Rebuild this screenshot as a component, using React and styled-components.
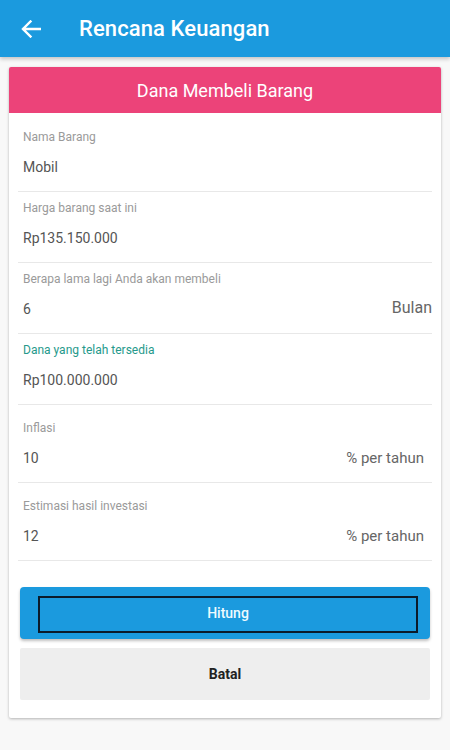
import React from "react";
import styled, { createGlobalStyle } from "styled-components";

const Global = createGlobalStyle`
  html, body { margin: 0; padding: 0; background: #f8f8f8; }
  body { font-family: Roboto, "Noto Sans", Arial, sans-serif; }
  * { box-sizing: border-box; }
`;

const Page = styled.div`
  width: 450px;
  min-height: 750px;
  background: #f8f8f8;
`;

const AppBar = styled.header`
  height: 57px;
  background: #1b9ade;
  display: flex;
  align-items: center;
  padding-left: 21px;
  box-shadow: 0 2px 4px rgba(0, 0, 0, 0.22);
  position: relative;
  z-index: 1;
`;

const BackBtn = styled.div`
  width: 20px;
  height: 20px;
  display: flex;
  align-items: center;
  justify-content: center;
`;

const Title = styled.h1`
  margin: 0 0 0 38px;
  font-size: 22px;
  font-weight: 500;
  color: #ffffff;
  letter-spacing: 0.1px;
`;

const Main = styled.main`
  padding: 10px 9px;
`;

const Card = styled.section`
  background: #fff;
  border-radius: 2px;
  box-shadow: 0 1px 3px rgba(0, 0, 0, 0.28);
  overflow: hidden;
  padding-bottom: 18px;
`;

const CardHeader = styled.div`
  height: 46px;
  background: #ec4379;
  color: #fff;
  font-size: 18px;
  display: flex;
  align-items: center;
  justify-content: center;
`;

const Fields = styled.div`
  padding: 0 9px;
`;

const Field = styled.div`
  padding: ${(p) => p.$top}px 0 14px 5px;
  border-bottom: 1px solid #e8e8e8;
`;

const Label = styled.div`
  font-size: 12px;
  line-height: 16px;
  color: ${(p) => (p.$active ? "#26998b" : "#9a9a9a")};
  margin-bottom: 12px;
`;

const ValueRow = styled.div`
  display: flex;
  align-items: center;
  justify-content: space-between;
  height: 20px;
`;

const Value = styled.span`
  font-size: 14px;
  color: #555;
`;

const Suffix = styled.span`
  font-size: ${(p) => p.$size}px;
  color: #666;
  margin-right: ${(p) => p.$right}px;
  margin-top: ${(p) => p.$shift}px;
`;

const Actions = styled.div`
  padding: 26px 11px 0;
  display: flex;
  flex-direction: column;
  gap: 9px;
`;

const PrimaryButton = styled.button`
  height: 52px;
  border: none;
  border-radius: 4px;
  background: #1b9ade;
  box-shadow: 0 2px 3px rgba(0, 0, 0, 0.25);
  padding: 9px 12px 6px 18px;
  display: flex;
  cursor: pointer;
`;

const FocusRing = styled.span`
  flex: 1;
  border: 2px solid #0b1b2b;
  display: flex;
  align-items: center;
  justify-content: center;
  padding-bottom: 3px;
  font-family: Roboto, sans-serif;
  font-size: 14px;
  font-weight: 500;
  color: #eefaff;
`;

const SecondaryButton = styled.button`
  height: 52px;
  border: none;
  border-radius: 2px;
  background: #eeeeee;
  font-family: Roboto, sans-serif;
  font-size: 14px;
  font-weight: 700;
  color: #222;
  cursor: pointer;
`;

const fields = [
  { label: "Nama Barang", value: "Mobil", top: 16 },
  { label: "Harga barang saat ini", value: "Rp135.150.000", top: 8 },
  {
    label: "Berapa lama lagi Anda akan membeli",
    value: "6",
    top: 8,
    suffix: "Bulan",
    size: 16,
    right: 0,
    shift: -4,
  },
  { label: "Dana yang telah tersedia", value: "Rp100.000.000", top: 8, active: true },
  { label: "Inflasi", value: "10", top: 15, suffix: "% per tahun", size: 15, right: 8, shift: 0 },
  {
    label: "Estimasi hasil investasi",
    value: "12",
    top: 15,
    suffix: "% per tahun",
    size: 15,
    right: 8,
    shift: 0,
  },
];

export default function App() {
  return (
    <Page>
      <Global />
      <AppBar>
        <BackBtn>
          <svg width="20" height="18" viewBox="0 0 20 18" fill="none">
            <path
              d="M19 9H2.5M9.5 1.5L2 9l7.5 7.5"
              stroke="#fff"
              strokeWidth="2.4"
              strokeLinecap="square"
            />
          </svg>
        </BackBtn>
        <Title>Rencana Keuangan</Title>
      </AppBar>
      <Main>
        <Card>
          <CardHeader>Dana Membeli Barang</CardHeader>
          <Fields>
            {fields.map((f) => (
              <Field key={f.label} $top={f.top}>
                <Label $active={f.active}>{f.label}</Label>
                <ValueRow>
                  <Value>{f.value}</Value>
                  {f.suffix && (
                    <Suffix $size={f.size} $right={f.right} $shift={f.shift}>
                      {f.suffix}
                    </Suffix>
                  )}
                </ValueRow>
              </Field>
            ))}
          </Fields>
          <Actions>
            <PrimaryButton>
              <FocusRing>Hitung</FocusRing>
            </PrimaryButton>
            <SecondaryButton>Batal</SecondaryButton>
          </Actions>
        </Card>
      </Main>
    </Page>
  );
}
